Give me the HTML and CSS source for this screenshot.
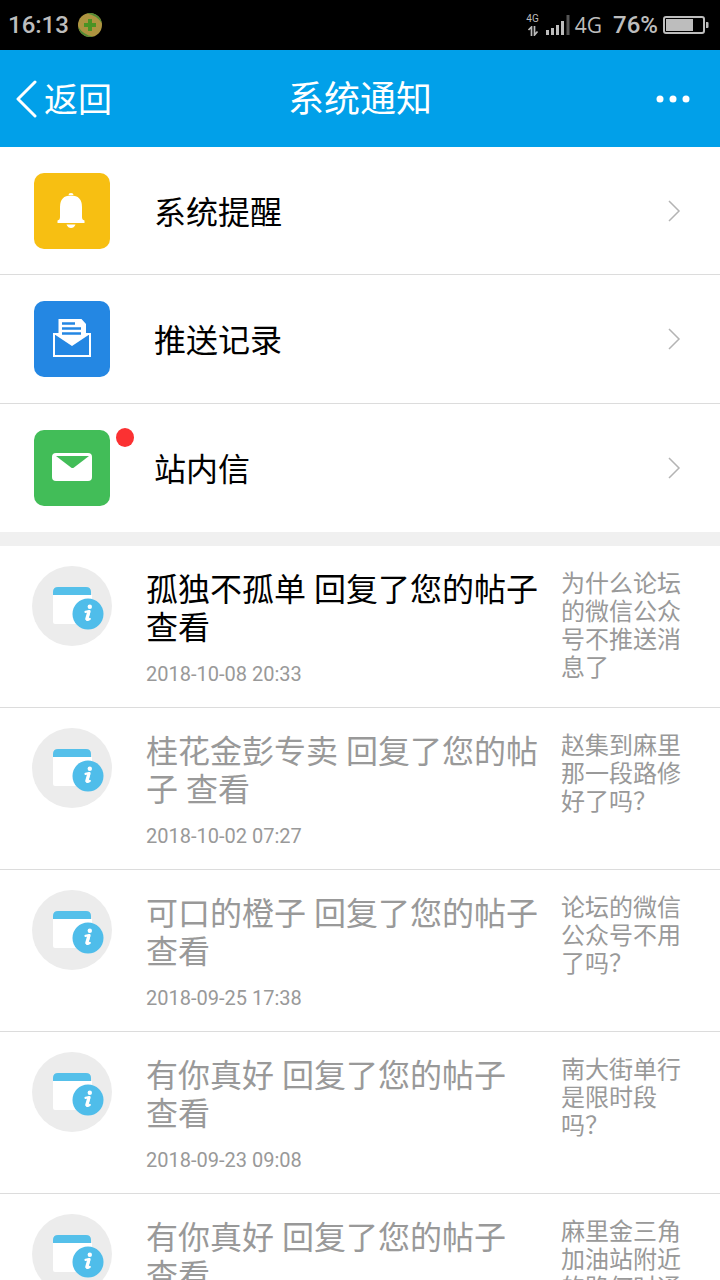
FILE: index.html
```html
<!DOCTYPE html>
<html lang="zh-CN">
<head>
<meta charset="utf-8">
<meta name="viewport" content="width=device-width, initial-scale=1">
<title>系统通知</title>
<link rel="stylesheet" href="styles.css">
</head>
<body>
<svg class="defs" aria-hidden="true">
  <symbol id="notice" viewBox="0 0 80 80">
    <circle cx="40" cy="40" r="40" fill="#ececec"/>
    <path d="M21 29h39v29H23q-2 0-2-2z" fill="#fff"/>
    <path d="M21 29v-3q0-5 5-5h28q5 0 5 5v3z" fill="#55c0ea"/>
    <circle cx="56" cy="48" r="15.500" fill="#4fbdea"/>
    <circle cx="57.800" cy="40.800" r="2.200" fill="#fff"/>
    <path d="M53.500 45.800l4-.8-2.300 8q-.4 2 2.600-.2" fill="none" stroke="#fff" stroke-width="2.200" stroke-linecap="round" stroke-linejoin="round"/>
    <path d="M56.800 46l-2 7" stroke="#fff" stroke-width="3.200" stroke-linecap="round"/>
  </symbol>
  <symbol id="chevron" viewBox="0 0 14 22">
    <path d="M2 1l10 10L2 21" fill="none" stroke="#b4b4b4" stroke-width="1.500"/>
  </symbol>
</svg>
<div class="screen">
  <div class="status">
    <span class="clock">16:13</span>
    <svg class="app" viewBox="0 0 24 24" aria-hidden="true">
      <circle cx="12" cy="12" r="12" fill="#ad9440"/>
      <path d="M9 .4A12 12 0 0 1 23.700 10 22 22 0 0 0 9 .4zM.3 14A12 12 0 0 0 15 23.600 22 22 0 0 1 .3 14z" fill="#4f8b35"/>
      <path d="M10 6h4v4h4v4h-4v4h-4v-4H6v-4h4z" fill="#4a9324"/>
    </svg>
    <span class="sim"><span class="sim-label">4G</span>
      <svg class="arrows" viewBox="0 0 12 10" aria-hidden="true"><path d="M1.500 4L4.500 1v9M7.500 0v9l3-3.500" fill="none" stroke="#bbb" stroke-width="1.700"/></svg>
    </span>
    <svg class="signal" viewBox="0 0 24 20" aria-hidden="true">
      <path d="M1.500 20v-5M6.500 20v-7M11.500 20v-10M16.500 20v-14" stroke="#bdbdbd" stroke-width="3"/>
      <path d="M22 20V0" stroke="#555" stroke-width="3"/>
    </svg>
    <span class="net">4G</span>
    <span class="percent">76%</span>
    <svg class="battery" viewBox="0 0 46 18" aria-hidden="true">
      <rect x="1" y="1" width="40" height="16" rx="2" fill="none" stroke="#bdbdbd" stroke-width="2"/>
      <path d="M3 3h27v12H3z" fill="#bdbdbd"/><path d="M43 6h1.500q1 0 1 1v4q0 1-1 1H43z" fill="#bdbdbd"/>
    </svg>
  </div>
  <header class="bar">
    <button class="back" type="button">
      <svg class="back-icon" viewBox="0 0 22 38" aria-hidden="true"><path d="M20 2L3 19l17 17" fill="none" stroke="#fff" stroke-width="3" stroke-linecap="round" stroke-linejoin="round"/></svg>
      <span class="back-label">返回</span>
    </button>
    <h1 class="title">系统通知</h1>
    <button class="more" type="button" aria-label="更多">
      <svg class="dots" viewBox="0 0 34 8" aria-hidden="true"><g fill="#fff"><circle cx="4" cy="4" r="3.500"/><circle cx="17" cy="4" r="3.500"/><circle cx="30" cy="4" r="3.500"/></g></svg>
    </button>
  </header>
  <main class="content">
    <nav class="menu">
      <a class="entry" href="#remind">
        <span class="tile yellow"><svg class="glyph" viewBox="0 0 76 76" aria-hidden="true"><g fill="#fff"><path d="M34.500 22q0-2 2.500-2t2.500 2z"/><path d="M26 44V34q0-11.500 11-11.500T48 34v10q0 3 2.500 3.500v2.500h-27v-2.500Q26 47 26 44z"/><path d="M32.500 51.500h9q-1.500 3.500-4.500 3.500t-4.500-3.500z"/></g></svg></span>
        <span class="name">系统提醒</span>
        <svg class="chevron" aria-hidden="true"><use href="#chevron"/></svg>
      </a>
      <a class="entry" href="#push">
        <span class="tile blue"><svg class="glyph" viewBox="0 0 76 76" aria-hidden="true"><path d="M20 33h36v22H20z" fill="none" stroke="#fff" stroke-width="2"/><path d="M20 33l4.500 1V18h23l4.500 5v11l4-1-18 12z" fill="#fff"/><path d="M28 22.500h13M28 27.500h19M28 32.500h19" stroke="#2487e3" stroke-width="2.500"/></svg></span>
        <span class="name">推送记录</span>
        <svg class="chevron" aria-hidden="true"><use href="#chevron"/></svg>
      </a>
      <a class="entry" href="#mail">
        <span class="tile green"><svg class="glyph" viewBox="0 0 76 76" aria-hidden="true"><rect x="18" y="23" width="40" height="28" rx="4" fill="#fff"/><path d="M22 26h33L40 37.500q-1.500 1-3 0z" fill="#42bd58"/></svg><span class="unread"></span></span>
        <span class="name">站内信</span>
        <svg class="chevron" aria-hidden="true"><use href="#chevron"/></svg>
      </a>
    </nav>
    <section class="notices">
      <article class="notice unseen">
        <svg class="avatar" aria-hidden="true"><use href="#notice"/></svg>
        <div class="body"><p class="message">孤独不孤单 回复了您的帖子 <a class="view" href="#n1">查看</a></p><time class="time">2018-10-08 20:33</time></div>
        <p class="topic">为什么论坛的微信公众号不推送消息了</p>
      </article>
      <article class="notice">
        <svg class="avatar" aria-hidden="true"><use href="#notice"/></svg>
        <div class="body"><p class="message">桂花金彭专卖 回复了您的帖子 <a class="view" href="#n2">查看</a></p><time class="time">2018-10-02 07:27</time></div>
        <p class="topic">赵集到麻里那一段路修好了吗？</p>
      </article>
      <article class="notice">
        <svg class="avatar" aria-hidden="true"><use href="#notice"/></svg>
        <div class="body"><p class="message">可口的橙子 回复了您的帖子 <a class="view" href="#n3">查看</a></p><time class="time">2018-09-25 17:38</time></div>
        <p class="topic">论坛的微信公众号不用了吗？</p>
      </article>
      <article class="notice">
        <svg class="avatar" aria-hidden="true"><use href="#notice"/></svg>
        <div class="body"><p class="message">有你真好 回复了您的帖子 <a class="view" href="#n4">查看</a></p><time class="time">2018-09-23 09:08</time></div>
        <p class="topic">南大街单行是限时段吗？</p>
      </article>
      <article class="notice">
        <svg class="avatar" aria-hidden="true"><use href="#notice"/></svg>
        <div class="body"><p class="message">有你真好 回复了您的帖子 <a class="view" href="#n5">查看</a></p></div>
        <p class="topic">麻里金三角加油站附近的路何时通</p>
      </article>
    </section>
  </main>
</div>
</body>
</html>
```

FILE: styles.css
```css
* { box-sizing: border-box; }
body, h1, p { margin: 0; }
body { font-family: Roboto, "Noto Sans CJK SC", sans-serif; background: #fff; color: #000; }
a { color: inherit; text-decoration: none; }
button { border: 0; padding: 0; background: none; color: inherit; font: inherit; }
svg { flex: none; display: block; }
.defs { position: absolute; width: 0; height: 0; }

.screen { height: 100vh; display: flex; flex-direction: column; overflow: hidden; }

.status { flex: none; display: flex; align-items: center; height: 50px; padding: 0 11px 0 8px; background: #000; color: #bdbdbd; font-size: 24px; }
.clock { font-weight: 500; }
.app { width: 24px; height: 24px; margin-left: 9px; }
.sim { display: flex; flex-direction: column; align-items: center; gap: 2px; margin-left: auto; }
.sim-label { font-size: 10px; line-height: 10px; }
.arrows { width: 12px; height: 10px; }
.signal { width: 24px; height: 20px; margin-left: 7px; }
.net { margin-left: 5px; font-family: "Open Sans", sans-serif; font-size: 21px; }
.percent { margin-left: 11px; font-weight: 500; }
.battery { width: 46px; height: 18px; margin-left: 5px; }

.bar { flex: none; display: grid; grid-template-columns: 1fr auto 1fr; align-items: center; height: 97px; padding: 0 15px; background: #01a0e9; color: #fff; }
.back { justify-self: start; display: flex; align-items: center; gap: 7px; font-size: 34px; line-height: 40px; }
.back-icon { width: 22px; height: 38px; }
.back-label, .title { padding-top: 2px; }
.title { font-size: 36px; font-weight: 400; line-height: 40px; }
.more { justify-self: end; padding: 12px 15px; }
.dots { width: 34px; height: 8px; }

.content { flex: 1; min-height: 0; overflow-y: auto; scrollbar-width: none; }

.menu { border-bottom: 14px solid #f0f0f0; }
.entry { display: flex; align-items: center; gap: 44px; height: 127px; padding: 0 39px 0 34px; }
.entry + .entry { height: 129px; border-top: 1px solid #dcdcdc; }
.tile { position: relative; width: 76px; height: 76px; border-radius: 10px; }
.glyph { width: 76px; height: 76px; }
.yellow { background: #f7bf12; }
.blue { background: #2487e3; }
.green { background: #42bd58; }
.unread { position: absolute; top: -2px; right: -24px; width: 18px; height: 19px; border-radius: 50%; background: #fb3132; }
.name { flex: 1; padding-top: 4px; font-size: 32px; line-height: 40px; }
.chevron { width: 14px; height: 22px; }

.notice { display: flex; align-items: flex-start; min-height: 162px; padding: 20px 39px 20px 32px; border-bottom: 1px solid #dcdcdc; color: #999; }
.avatar { width: 80px; height: 80px; }
.body { flex: 1; margin: 5px 20px 0 34px; }
.message { font-size: 32px; line-height: 38px; }
.unseen .message { color: #000; }
.time { display: block; margin-top: 15px; font-size: 20px; line-height: 24px; }
.topic { width: 120px; margin-top: 4px; font-size: 24px; line-height: 28px; }
```
